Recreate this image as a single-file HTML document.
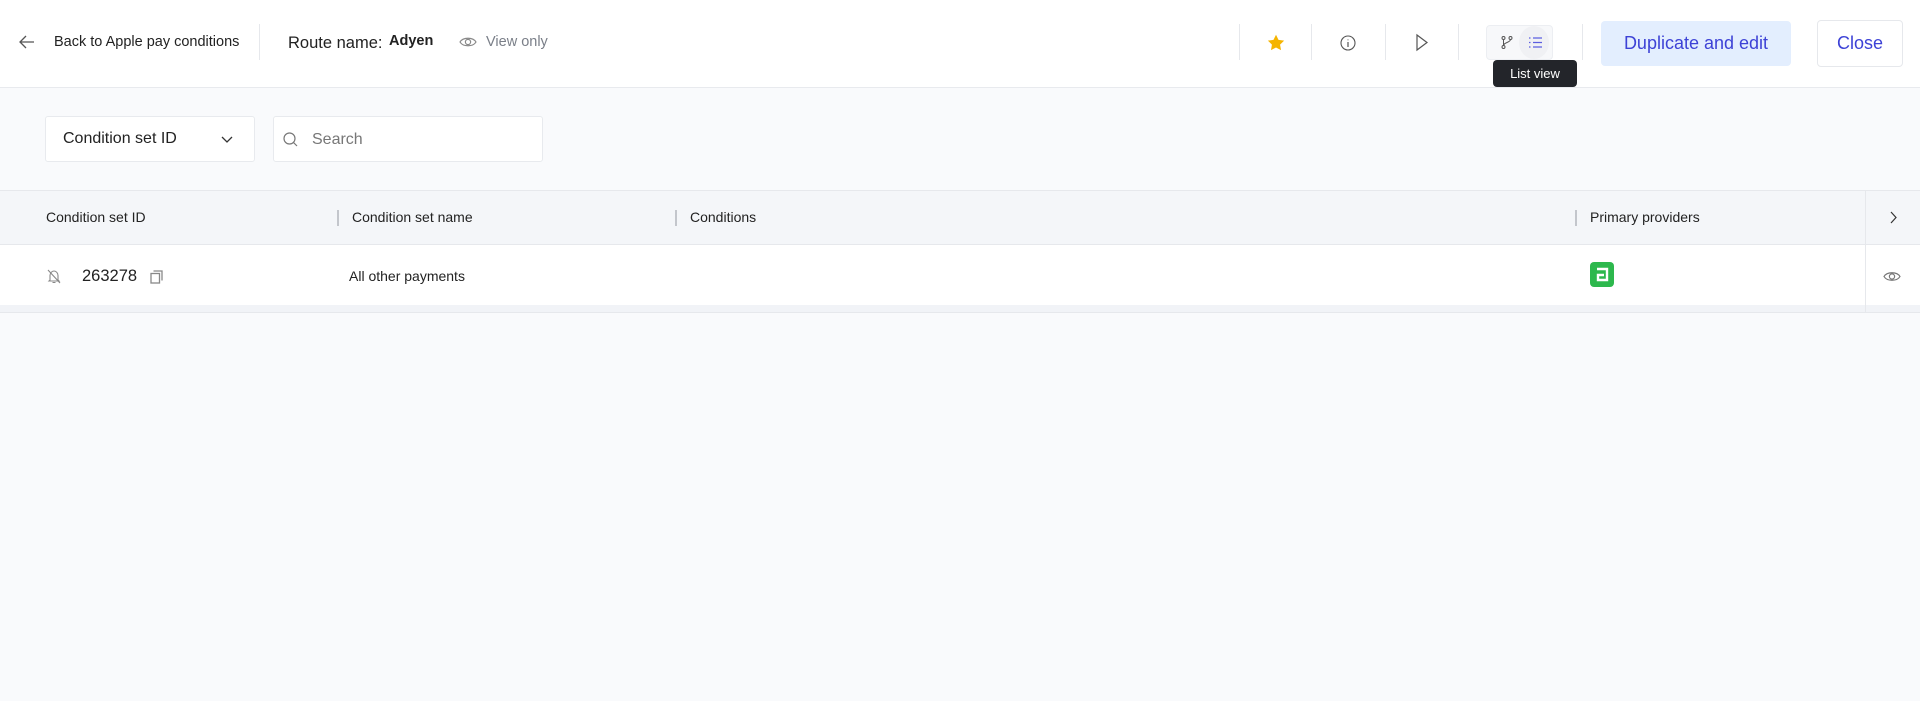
<!DOCTYPE html>
<html><head><meta charset="utf-8"><style>
*{box-sizing:border-box;margin:0;padding:0}
body{width:1920px;height:701px;background:#f9fafc;font-family:"Liberation Sans",Arial,sans-serif;color:#1f2329;position:relative;overflow:hidden}
.abs{position:absolute}
.hdr{left:0;top:0;width:1920px;height:88px;background:#fff;border-bottom:1px solid #e8eaee}
.vd{position:absolute;width:1px;background:#e6e8ec;top:24px;height:36px}
.t{position:absolute;white-space:nowrap}
svg{position:absolute;overflow:visible}
</style></head><body>
<div class="abs hdr">
 <svg style="left:19px;top:35px" width="16" height="14" viewBox="0 0 16 14"><path d="M15 7H1M7 1L1 7l6 6" fill="none" stroke="#555" stroke-width="1.3"/></svg>
 <div class="t" style="left:54px;top:34px;font-size:14.5px;font-weight:500;color:#222">Back to Apple pay conditions</div>
 <div class="vd" style="left:259px"></div>
 <div class="t" style="left:288px;top:34px;font-size:16.5px;color:#222">Route name:</div>
 <div class="t" style="left:389px;top:33px;font-size:14.5px;font-weight:bold;color:#222">Adyen</div>
 <svg style="left:459px;top:35px" width="18" height="14" viewBox="0 0 18 14"><path d="M1 7C4 2 14 2 17 7C14 12 4 12 1 7Z" fill="none" stroke="#888" stroke-width="1.2"/><circle cx="9" cy="7" r="2.6" fill="none" stroke="#888" stroke-width="1.2"/></svg>
 <div class="t" style="left:486px;top:34px;font-size:14.5px;color:#7a7f88">View only</div>
 <div class="vd" style="left:1239px"></div><div class="vd" style="left:1311px"></div><div class="vd" style="left:1385px"></div><div class="vd" style="left:1458px"></div><div class="vd" style="left:1582px"></div>
 <svg style="left:1267px;top:34px" width="18" height="17" viewBox="0 0 24 23"><path d="M12 1l3.4 7 7.6 1-5.5 5.3 1.3 7.6L12 18.3 5.2 21.9l1.3-7.6L1 9l7.6-1z" fill="#f5b400"/></svg>
 <svg style="left:1340px;top:35px" width="16" height="16" viewBox="0 0 16 16"><circle cx="8" cy="8" r="7" fill="none" stroke="#555" stroke-width="1.1"/><path d="M8 7v5M8 4.5v.8" stroke="#555" stroke-width="1.2"/></svg>
 <svg style="left:1416px;top:34px" width="12" height="17" viewBox="0 0 12 17"><path d="M1 1l10 7.5L1 16z" fill="none" stroke="#555" stroke-width="1.2"/></svg>
 <div class="abs" style="left:1486px;top:25px;width:67px;height:35px;border:1px solid #eceef2;border-radius:4px;background:#f7f8fa"></div>
 <div class="abs" style="left:1519px;top:26px;width:30px;height:33px;border-radius:50%;background:#f0f1f4"></div>
 <svg style="left:1501px;top:36px" width="12" height="13" viewBox="0 0 12 13"><circle cx="2.5" cy="2" r="1.5" fill="none" stroke="#555"/><circle cx="9.5" cy="2" r="1.5" fill="none" stroke="#555"/><circle cx="2.5" cy="11" r="1.5" fill="none" stroke="#555"/><path d="M2.5 3.5v6M9.5 3.5c0 3-7 3-7 6" fill="none" stroke="#555"/></svg>
 <svg style="left:1529px;top:37px" width="13" height="11" viewBox="0 0 13 11"><path d="M0 1h1.5M0 5.5h1.5M0 10h1.5M4 1h9M4 5.5h9M4 10h9" stroke="#5b5fe0" stroke-width="1.2"/></svg>
 <div class="abs" style="left:1493px;top:60px;width:84px;height:27px;background:#23252a;border-radius:4px;color:#fff;font-size:13px;text-align:center;line-height:27px">List view</div>
 <div class="abs" style="left:1601px;top:21px;width:190px;height:45px;background:#e3eefe;border-radius:4px;color:#3d42d6;font-size:18px;text-align:center;line-height:45px">Duplicate and edit</div>
 <div class="abs" style="left:1817px;top:20px;width:86px;height:47px;background:#fff;border:1px solid #e6e8ec;border-radius:4px;color:#3d42d6;font-size:18px;text-align:center;line-height:45px">Close</div>
</div>
<div class="abs" style="left:45px;top:116px;width:210px;height:46px;background:#fff;border:1px solid #e8eaee;border-radius:3px"></div>
<div class="t" style="left:63px;top:130px;font-size:16px;color:#222">Condition set ID</div>
<svg style="left:221px;top:136px" width="12" height="7" viewBox="0 0 12 7"><path d="M1 1l5 5 5-5" fill="none" stroke="#333" stroke-width="1.3"/></svg>
<div class="abs" style="left:273px;top:116px;width:270px;height:46px;background:#fff;border:1px solid #e8eaee;border-radius:3px"></div>
<svg style="left:283px;top:132px" width="15" height="15" viewBox="0 0 15 15"><circle cx="6.5" cy="6.5" r="5.5" fill="none" stroke="#777" stroke-width="1.2"/><path d="M10.5 10.5L14 14" stroke="#777" stroke-width="1.2"/></svg>
<div class="t" style="left:312px;top:131px;font-size:16px;color:#777">Search</div>
<div class="abs" style="left:0;top:190px;width:1920px;height:55px;background:#f4f6f9;border-top:1px solid #e6e8ec;border-bottom:1px solid #e6e8ec"></div>
<div class="abs" style="left:0;top:245px;width:1920px;height:61px;background:#fff"></div>
<div class="abs" style="left:0;top:305px;width:1920px;height:8px;background:#f1f3f7;border-bottom:1px solid #e6e8ec"></div>
<div class="abs" style="left:1865px;top:190px;width:1px;height:123px;background:#e6e8ec"></div>
<div class="t" style="left:46px;top:209px;font-size:14px;color:#222">Condition set ID</div>
<div class="abs" style="left:337px;top:210px;width:2px;height:16px;background:#c3c6cc"></div>
<div class="t" style="left:352px;top:209px;font-size:14px;color:#222">Condition set name</div>
<div class="abs" style="left:675px;top:210px;width:2px;height:16px;background:#c3c6cc"></div>
<div class="t" style="left:690px;top:209px;font-size:14px;color:#222">Conditions</div>
<div class="abs" style="left:1575px;top:210px;width:2px;height:16px;background:#c3c6cc"></div>
<div class="t" style="left:1590px;top:209px;font-size:14px;color:#222">Primary providers</div>
<svg style="left:1890px;top:211px" width="7" height="13" viewBox="0 0 7 13"><path d="M1 1l5 5.5L1 12" fill="none" stroke="#333" stroke-width="1.2"/></svg>
<svg style="left:47px;top:269px" width="14" height="15" viewBox="0 0 14 15"><path d="M3 11V6.5C3 4 5 2 7 2s4 2 4 4.5V11l1 1H2zM5.5 13.5h3M1 1l12 13" fill="none" stroke="#888" stroke-width="1.1"/></svg>
<div class="t" style="left:82px;top:267px;font-size:16.5px;color:#222">263278</div>
<svg style="left:150px;top:270px" width="13" height="14" viewBox="0 0 13 14"><rect x="1" y="3.5" width="8.5" height="9.5" fill="none" stroke="#888" stroke-width="1.3"/><path d="M3.5 1h8.5v9.5" fill="none" stroke="#888" stroke-width="1.3"/></svg>
<div class="t" style="left:349px;top:268px;font-size:14px;color:#222">All other payments</div>
<div class="abs" style="left:1590px;top:262px;width:24px;height:25px;background:#2db84d;border-radius:4px"></div>
<svg style="left:1596px;top:267px" width="13" height="15" viewBox="0 0 13 15"><path d="M1 2h10v11H2V8h6" fill="none" stroke="#fff" stroke-width="2.4"/></svg>
<svg style="left:1883px;top:270px" width="18" height="13" viewBox="0 0 18 13"><path d="M1 6.5C4 1.5 14 1.5 17 6.5C14 11.5 4 11.5 1 6.5Z" fill="none" stroke="#777" stroke-width="1.2"/><circle cx="9" cy="6.5" r="2.6" fill="none" stroke="#777" stroke-width="1.2"/></svg>
</body></html>
